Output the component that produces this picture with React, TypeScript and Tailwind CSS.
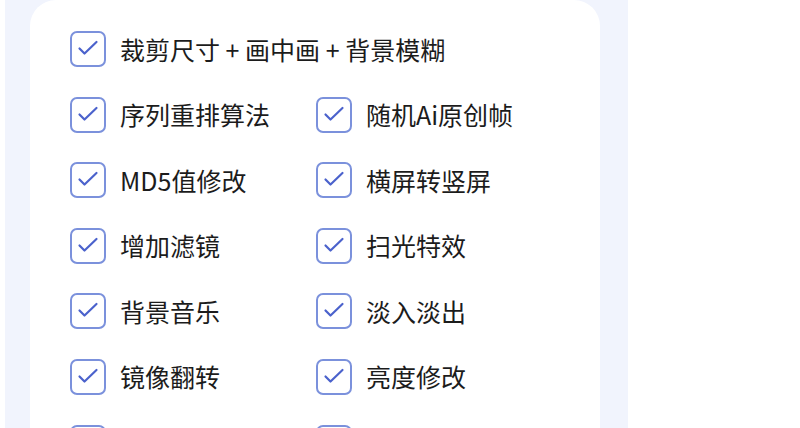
import React from 'react';

const options = [
  ['序列重排算法', '随机Ai原创帧'],
  ['MD5值修改', '横屏转竖屏'],
  ['增加滤镜', '扫光特效'],
  ['背景音乐', '淡入淡出'],
  ['镜像翻转', '亮度修改'],
  ['', ''],
];

const CheckItem = ({ label }: { label: string }) => (
  <label className="flex items-center h-[36px]">
    <span className="relative w-[36px] h-[36px] rounded-[7px] border-2 border-[#7b91dc] bg-white shrink-0">
      <svg className="absolute -left-[2px] -top-[2px]" width="36" height="36" viewBox="0 0 36 36" fill="none">
        <polyline
          points="9.5,17.5 14.5,22.5 26.5,11"
          stroke="#4b62cc"
          strokeWidth="2.2"
          strokeLinecap="round"
          strokeLinejoin="round"
        />
      </svg>
    </span>
    {label && (
      <span className="ml-[14px] text-[25px] leading-none text-[#1c1c1c] whitespace-nowrap">{label}</span>
    )}
  </label>
);

const App = () => {
  return (
    <div
      className="w-[800px] h-[428px] bg-white flex overflow-hidden"
      style={{ fontFamily: '"Noto Sans CJK SC", "Noto Sans", sans-serif' }}
    >
      {/* Tinted strip around the card */}
      <div className="ml-[5px] w-[623px] h-full bg-[#f1f4fd] pl-[25px] pr-[28px]">
        {/* Card */}
        <div className="h-[460px] bg-white rounded-t-[26px] pl-[40px] pt-[31px]">
          <div className="flex flex-col gap-[29.6px]">
            <CheckItem label="裁剪尺寸 + 画中画 + 背景模糊" />
            {options.map(([a, b], i) => (
              <div key={i} className="grid grid-cols-[246px_246px]">
                <CheckItem label={a} />
                <CheckItem label={b} />
              </div>
            ))}
          </div>
        </div>
      </div>
    </div>
  );
};

export default App;
